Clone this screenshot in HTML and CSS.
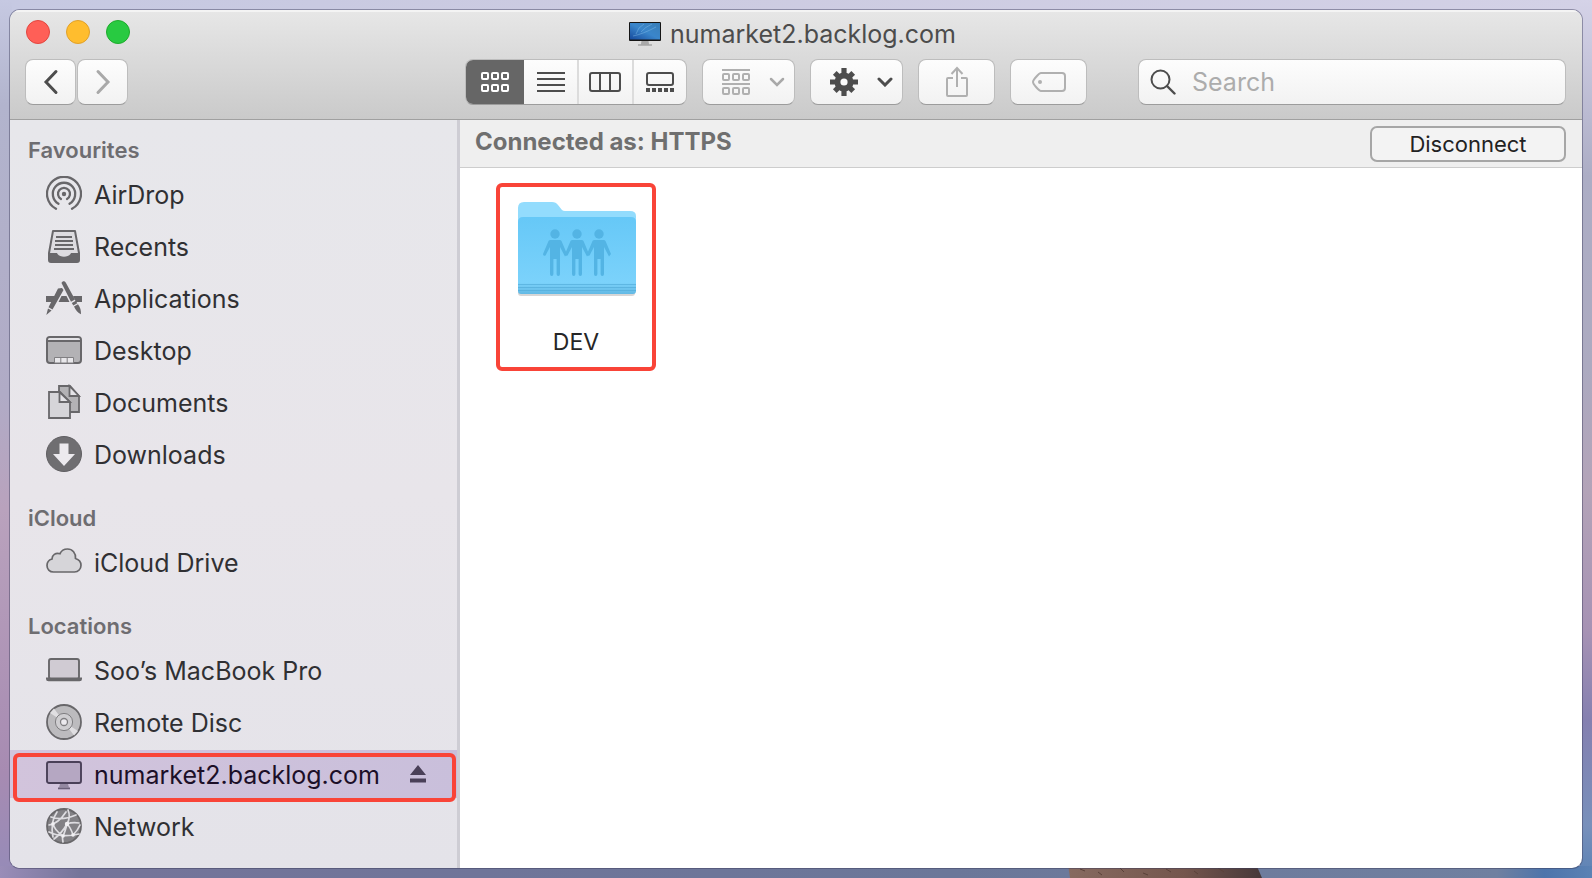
FILE: index.html
```html
<!DOCTYPE html>
<html lang="en">
<head>
<meta charset="utf-8">
<title>numarket2.backlog.com</title>
<meta name="viewport" content="width=device-width, initial-scale=1">
<link rel="stylesheet" href="styles.css">
</head>
<body>
<svg class="rock" viewBox="0 0 194 14" preserveAspectRatio="none" aria-hidden="true">
  <defs><linearGradient id="rock" x1="0" x2="1"><stop offset="0" stop-color="#876a60"/><stop offset=".6" stop-color="#74564d"/><stop offset="1" stop-color="#463839"/></linearGradient></defs>
  <path d="M0 0H188L194 14H2Z" fill="url(#rock)"/>
  <path d="M12 5l5 2M30 8l4 3M52 4l4 4M75 9l5 2M98 5l5 3M126 7l4 3M150 4l6 4" stroke="#5a4139" stroke-width="1"/>
</svg>
<div class="window">
  <header class="chrome">
    <div class="titlebar">
      <div class="lights">
        <button class="light light-close" type="button" aria-label="Close"></button>
        <button class="light light-min" type="button" aria-label="Minimise"></button>
        <button class="light light-zoom" type="button" aria-label="Zoom"></button>
      </div>
      <h1 class="title">
        <svg width="32" height="26" viewBox="0 0 32 26" aria-hidden="true">
          <defs><linearGradient id="scr" x1="0" y1="1" x2="1" y2="0"><stop offset="0" stop-color="#164a9c"/><stop offset=".5" stop-color="#3a86cb"/><stop offset="1" stop-color="#3a7fb8"/></linearGradient></defs>
          <path d="M12.500 20h7l.6 3.500h-8.200z" fill="#a9a9a9"/><path d="M9 23.400h14v1.200H9z" fill="#8a8a8a"/>
          <rect y="1" width="32" height="19" rx="1" fill="#151515"/><rect x="1" y="2" width="30" height="16.500" fill="url(#scr)"/>
          <path d="M7 13Q9 6 15 3M12 11q4-5 11-8M4 15Q14 13 27 6" fill="none" stroke="#8fc6ee" stroke-opacity=".4"/>
        </svg>
        <span>numarket2.backlog.com</span>
      </h1>
    </div>
    <div class="toolbar">
      <div class="nav">
        <button class="btn btn-nav" type="button" aria-label="Back"><svg width="16" height="26" viewBox="0 0 16 26"><path d="M13 2.500L3 13l10 10.500" fill="none" stroke="#4d4d4d" stroke-width="3" stroke-linecap="round"/></svg></button>
        <button class="btn btn-nav" type="button" aria-label="Forward"><svg width="16" height="26" viewBox="0 0 16 26"><path d="M3 2.500L13 13 3 23.500" fill="none" stroke="#a9a9a9" stroke-width="3" stroke-linecap="round"/></svg></button>
      </div>
      <div class="spacer-wide"></div>
      <div class="tools">
        <div class="views">
          <button class="view view-on" type="button" aria-label="Icon view"><svg width="28" height="20" viewBox="0 0 28 20" fill="none" stroke="#fff" stroke-width="2"><rect x="1" y="1" width="6" height="6" rx="1"/><rect x="11" y="1" width="6" height="6" rx="1"/><rect x="21" y="1" width="6" height="6" rx="1"/><rect x="1" y="13" width="6" height="6" rx="1"/><rect x="11" y="13" width="6" height="6" rx="1"/><rect x="21" y="13" width="6" height="6" rx="1"/></svg></button>
          <button class="view" type="button" aria-label="List view"><svg width="28" height="20" viewBox="0 0 28 20" stroke="#4d4d4d" stroke-width="2"><path d="M0 1h28M0 7h28M0 13h28M0 19h28"/></svg></button>
          <button class="view" type="button" aria-label="Column view"><svg width="32" height="20" viewBox="0 0 32 20" fill="none" stroke="#4d4d4d" stroke-width="2"><rect x="1" y="1" width="30" height="18" rx="2"/><path d="M11 1v18M21 1v18"/></svg></button>
          <button class="view" type="button" aria-label="Gallery view"><svg width="28" height="20" viewBox="0 0 28 20" fill="none" stroke="#4d4d4d" stroke-width="2"><rect x="1" y="1" width="26" height="12" rx="2"/><path d="M0 18h28" stroke-width="4" stroke-dasharray="4 2"/></svg></button>
        </div>
        <button class="btn btn-menu" type="button" aria-label="Group by"><svg width="28" height="26" viewBox="0 0 28 26" fill="none" stroke="#b0b0b0" stroke-width="2"><path d="M0 1h28M0 15h28"/><rect x="1" y="5" width="6" height="6" rx="1"/><rect x="11" y="5" width="6" height="6" rx="1"/><rect x="21" y="5" width="6" height="6" rx="1"/><rect x="1" y="19" width="6" height="6" rx="1"/><rect x="11" y="19" width="6" height="6" rx="1"/><rect x="21" y="19" width="6" height="6" rx="1"/></svg><svg width="16" height="10" viewBox="0 0 16 10"><path d="M2 2l6 6 6-6" fill="none" stroke="#a9a9a9" stroke-width="2.500" stroke-linecap="round"/></svg></button>
        <button class="btn btn-menu" type="button" aria-label="Action"><svg width="28" height="28" viewBox="-14 -14 28 28"><g fill="#4d4d4d"><path d="M-2.600-14h5.200v28h-5.200z"/><path d="M-2.600-14h5.200v28h-5.200z" transform="rotate(45) scale(1 .93)"/><path d="M-2.600-14h5.200v28h-5.200z" transform="rotate(90)"/><path d="M-2.600-14h5.200v28h-5.200z" transform="rotate(135) scale(1 .93)"/><circle r="9.500"/></g><circle r="3.600" fill="#fafafa"/></svg><svg width="16" height="10" viewBox="0 0 16 10"><path d="M2 2l6 6 6-6" fill="none" stroke="#4d4d4d" stroke-width="3" stroke-linecap="round"/></svg></button>
        <button class="btn btn-tool" type="button" aria-label="Share"><svg width="24" height="32" viewBox="0 0 24 32" fill="none" stroke="#b0b0b0" stroke-width="2"><path d="M8 12H3a1 1 0 0 0-1 1v16a1 1 0 0 0 1 1h18a1 1 0 0 0 1-1V13a1 1 0 0 0-1-1h-5M12 21V2M6.500 8L12 2l5.500 6"/></svg></button>
        <button class="btn btn-tool" type="button" aria-label="Tags"><svg width="34" height="20" viewBox="0 0 34 20" fill="none" stroke="#b0b0b0" stroke-width="2"><path d="M9 1h21a3 3 0 0 1 3 3v12a3 3 0 0 1-3 3H9C7 19 1 12 1 10S7 1 9 1z"/><circle cx="8" cy="10" r="2" fill="#b0b0b0" stroke="none"/></svg></button>
      </div>
      <div class="spacer"></div>
      <label class="search">
        <svg width="26" height="26" viewBox="0 0 26 26" fill="none" stroke="#4d4d4d" stroke-width="2"><circle cx="10.500" cy="10.500" r="9"/><path d="M17 17l7.500 7.500" stroke-width="2.400" stroke-linecap="round"/></svg>
        <input type="search" placeholder="Search" aria-label="Search">
      </label>
    </div>
  </header>
  <div class="body">
    <nav class="sidebar" aria-label="Sidebar">
      <section class="group">
        <h2 class="heading">Favourites</h2>
        <ul class="list">
          <li><a class="item" href="#"><svg class="icon" viewBox="0 0 36 36" fill="none" stroke="#68676a" stroke-width="2.300" stroke-linecap="round"><circle cx="18" cy="18" r="2.200" fill="#68676a" stroke="none"/><path d="M15 23a6 6 0 1 1 6 0"/><path d="M12.500 27.700a11.200 11.200 0 1 1 11 0" /><path d="M10 32.800a17 17 0 1 1 16 0"/></svg><span class="label">AirDrop</span></a></li>
          <li><a class="item" href="#"><svg class="icon" viewBox="0 0 36 36"><path d="M7 3h22l4 22v7a2 2 0 0 1-2 2H5a2 2 0 0 1-2-2v-7z" fill="#dddce0" stroke="#68676a" stroke-width="2" stroke-linejoin="round"/><path d="M3 25h8c2 5 12 5 14 0h8v7a2 2 0 0 1-2 2H5a2 2 0 0 1-2-2z" fill="#68676a"/><path d="M10 9h16M9 13h18M9 17h18M8 21h20" stroke="#68676a" stroke-width="1.800"/></svg><span class="label">Recents</span></a></li>
          <li><a class="item" href="#"><svg class="icon" viewBox="0 0 36 36" fill="#68676a"><path d="M0 16h9l-3 6H0zM15.500 16h5l3 6h-11zM27 16h9v6h-6z"/><path d="M12 8.500l4-.5 1.500 2L6.500 29.500l-4-2.300zM2 28.500l3.600 2L.3 35z"/><path d="M15.500 3c1-2.500 3.600-2 4.500 0l9 16.500-4 2.300zM25.800 23l4-2.300 1.500 2.600-4 2.300zM28 26.500l4-2.300c2.500 3.500 3 6 3 10-3-1.500-5.500-4-7-7.700z"/></svg><span class="label">Applications</span></a></li>
          <li><a class="item" href="#"><svg class="icon" viewBox="0 0 36 36"><rect x="1" y="5" width="34" height="26" rx="3" fill="#b3b2b5" stroke="#68676a" stroke-width="2"/><path d="M2 8q0-2 2-2h28q2 0 2 2z" fill="#e4e3e7"/><path d="M1 9h34" stroke="#68676a" stroke-width="1.800"/><path d="M8.500 25.500h19V31h-19z" fill="#e8e7ea" stroke="#807f82"/><path d="M14.800 25v6M21.200 25v6" stroke="#807f82"/></svg><span class="label">Desktop</span></a></li>
          <li><a class="item" href="#"><svg class="icon" viewBox="0 0 36 36" stroke="#68676a" stroke-width="1.800"><path d="M13 2h11l9 10v16H13z" fill="#b3b2b5"/><path d="M23.500 2v10H33z" fill="#e4e3e7"/><path d="M3 8h11l10 10v16H3z" fill="#d6d5d9"/><path d="M13.500 8v10H24z" fill="#e4e3e7"/></svg><span class="label">Documents</span></a></li>
          <li><a class="item" href="#"><svg class="icon" viewBox="0 0 36 36"><circle cx="18" cy="18" r="17.500" fill="#6f6e71" stroke="#605f62"/><path d="M13.500 7.500h9v10.500h6.500L18 30 7 18h6.500z" fill="#eceaee"/></svg><span class="label">Downloads</span></a></li>
        </ul>
      </section>
      <section class="group">
        <h2 class="heading">iCloud</h2>
        <ul class="list">
          <li><a class="item" href="#"><svg class="icon" viewBox="0 0 36 36"><path d="M7.500 28C3.500 28 1 25 1 21.500 1 18.300 3.200 15.800 6 15 6 11 9.500 8.500 14 9.700 15.500 6.300 18.200 5 21.500 5 26.500 5 30 9 29.500 14.500 33 15.500 35 18.200 35 21.300 35 25 32.300 28 28.500 28Z" fill="#d6d5d9" stroke="#68676a" stroke-width="1.700"/></svg><span class="label">iCloud Drive</span></a></li>
        </ul>
      </section>
      <section class="group">
        <h2 class="heading">Locations</h2>
        <ul class="list">
          <li><a class="item" href="#"><svg class="icon" viewBox="0 0 36 36"><rect x="3" y="7" width="30" height="20" rx="2" fill="#d0cbd3" stroke="#68676a" stroke-width="1.900"/><path d="M0 25.500h36V27q0 2.300-2.500 2.300h-31Q0 29.300 0 27z" fill="#68676a"/></svg><span class="label">Soo’s MacBook Pro</span></a></li>
          <li><a class="item" href="#"><svg class="icon" viewBox="0 0 36 36"><circle cx="18" cy="18" r="17" fill="#bcbbbe" stroke="#68676a" stroke-width="1.800"/><path d="M18 18L4 9l4-4.500zM18 18l14 9-4 4.500z" fill="#e0dfe2"/><circle cx="18" cy="18" r="8.600" fill="#cfced1" stroke="#807f82"/><circle cx="18" cy="18" r="3.500" fill="#eceaee" stroke="#807f82" stroke-width="1.300"/></svg><span class="label">Remote Disc</span></a></li>
          <li><a class="item item-on" href="#"><svg class="icon" viewBox="0 0 36 36"><rect x="1" y="6" width="34" height="21" rx="2" fill="#b5a7c2" stroke="#4a4058" stroke-width="1.900"/><path d="M14 28h8l1 3.500h-10z" fill="#9388a0"/><path d="M12 31.500h12v1.800H12z" fill="#6b6078"/></svg><span class="label">numarket2.backlog.com</span>
            <svg class="eject" width="16" height="18" viewBox="0 0 16 18" fill="#4a4058"><path d="M8 0l8 10H0zM0 13.500h16v4H0z"/></svg></a></li>
          <li><a class="item" href="#"><svg class="icon" viewBox="0 0 36 36"><circle cx="18" cy="18" r="17" fill="#828185" stroke="#68676a" stroke-width="1.800"/><g fill="none" stroke="#dedde1" stroke-width="1.700" stroke-linecap="round"><path d="M5 9Q16 13 30 7M11 4Q4 14 7 29M22 2q3 7-1 14-5 9-13 15M3 17q9-1 17-13M21 16q4 4 6 11M21 16q5-2 12-1M3 24q12 6 30 2M17 34q-1-6 0-6 2-4 4-12M7 15q1 7 10 13M27 27q5-5 7-10"/></g><g fill="#f0eff2"><circle cx="21" cy="16" r="2.200"/><circle cx="27" cy="27" r="1.800"/><circle cx="17" cy="28" r="1.800"/><circle cx="7" cy="16" r="1.800"/></g></svg><span class="label">Network</span></a></li>
        </ul>
      </section>
      <div class="mark-host"></div>
    </nav>
    <main class="content">
      <div class="infobar">
        <p class="status">Connected as: HTTPS</p>
        <button class="disconnect" type="button">Disconnect</button>
      </div>
      <div class="files">
        <a class="file" href="#">
          <svg width="120" height="98" viewBox="0 0 120 98" aria-hidden="true">
            <defs>
              <linearGradient id="front" x1="0" y1="0" x2="0" y2="1"><stop offset="0" stop-color="#66c8f7"/><stop offset=".85" stop-color="#7bd2fb"/><stop offset="1" stop-color="#63b9e4"/></linearGradient>
            </defs>
            <rect x="2" y="89" width="117" height="7" rx="3" fill="#000" opacity=".16"/>
            <path d="M2 8q0-6 6-6h28q4 0 6 3l4 5q1 1 3 1h65q6 0 6 5v30H2z" fill="#93dcfd"/>
            <path d="M2 22q0-5 5-5h108q5 0 5 5v69q0 3-3 3H5q-3 0-3-3z" fill="url(#front)"/>
            <path d="M2 84.500h118M2 87.500h118M2 90.500h118" stroke="#4fa9d6" stroke-width="1" opacity=".6"/>
            <g fill="#53b4e4">
              <g id="person"><circle cx="39" cy="34" r="4.700"/><path d="M34.500 40h9q1.500 0 2 1l5.500 13-2 2.500L44 47v27q0 2-1.700 2t-1.700-2V59h-3.200v15q0 2-1.700 2T34 74V47l-4.500 8.500q-2.500 1-2.500-1.500L32.500 41q.5-1 2-1z"/></g>
              <use href="#person" x="22"/><use href="#person" x="44"/>
            </g>
          </svg>
          <span class="file-name">DEV</span>
        </a>
      </div>
    </main>
  </div>
</div>
</body>
</html>
```
FILE: styles.css
```css
* { box-sizing: border-box; }

body {
  margin: 0;
  min-height: 100vh;
  padding: 10px;
  display: flex;
  position: relative;
  font-family: Inter, "Liberation Sans", sans-serif;
  font-size: 25px;
  color: #303033;
  background:
    linear-gradient(90deg, #9a8db8 0, #75759a 5%, #6f7599 30%, #6b7799 60%, #7080a0 94%, #4d74ab 97%, #5b82b4 100%) bottom / 100% 12px no-repeat,
    linear-gradient(#c6c9e2 0, #b2b4cd 12%, #b0abc6 45%, #b9a2bd 58%, #a78bb2 88%, #958bb8 100%) left / 12px 100% no-repeat,
    linear-gradient(#d5d3e8 0, #acadc5 20%, #acaac0 42%, #b3a3b8 56%, #a692b4 72%, #8580b0 82%, #7890bb 94%, #5b82b4 100%) right / 12px 100% no-repeat,
    linear-gradient(90deg, #c6c9e2, #cccbe1 40%, #d3d1e6);
}

button, input { font: inherit; color: inherit; }
button { padding: 0; cursor: pointer; }
svg { display: block; flex: none; }

.rock {
  position: absolute;
  left: 67.1%;
  bottom: 0;
  width: 194px;
  height: 14px;
}

.window {
  position: relative;
  flex: 1;
  display: flex;
  flex-direction: column;
  border-radius: 10px;
  overflow: hidden;
  background: #fff;
  box-shadow: 0 0 0 1px rgba(60, 60, 90, .45);
}

.chrome {
  padding: 0 16px 14px 15px;
  background: linear-gradient(#e7e7e7, #cacaca);
  border-bottom: 1px solid #a0a0a0;
  box-shadow: inset 0 2px 0 #f4f4f4;
}

.titlebar {
  display: grid;
  grid-template-columns: 1fr auto 1fr;
  align-items: center;
  height: 49px;
}
.lights { display: flex; gap: 16px; padding: 0 0 5px 1px; }
.light { width: 24px; height: 24px; border-radius: 50%; border: 1px solid; }
.light-close { background: #ff5f57; border-color: #e2463f; }
.light-min { background: #ffbd2e; border-color: #e0a029; }
.light-zoom { background: #28ca41; border-color: #1eab2c; }
.title {
  display: flex;
  align-items: center;
  gap: 9px;
  margin: 0;
  padding: 0 6px 2px 0;
  font-size: 25px;
  line-height: 32px;
  font-weight: 400;
  color: #4c4c4c;
}

.toolbar { display: flex; align-items: center; }
.nav { display: flex; gap: 1px; }
.spacer-wide { flex: 20; }
.spacer { flex: 3; }
.tools { display: flex; gap: 15px; }

.btn, .views, .search {
  height: 46px;
  border: 1px solid #bdbdbd;
  border-bottom-color: #9c9c9c;
  border-radius: 8px;
  background: linear-gradient(#fdfdfd, #f2f2f2);
}
.btn { display: flex; align-items: center; justify-content: center; }
.btn-nav { width: 51px; }
.btn-menu { width: 93px; gap: 19px; padding-left: 10px; }
.btn-tool { width: 77px; }

.views { display: flex; overflow: hidden; width: 222px; }
.view {
  flex: 1;
  display: flex;
  align-items: center;
  justify-content: center;
  border: 0;
  border-left: 2px solid #dcdcdc;
  background: none;
}
.view-on { flex: 0 0 58px; border: 0; background: #666; }
.view-on + .view { border: 0; }

.search {
  flex: 0 1 428px;
  min-width: 0;
  display: flex;
  align-items: center;
  gap: 16px;
  padding: 0 11px;
}
.search input {
  flex: 1;
  width: 0;
  min-width: 0;
  border: 0;
  padding: 0;
  outline: 0;
  background: none;
  appearance: none;
}
.search input::placeholder { color: #acacac; opacity: 1; }

.body { flex: 1; display: flex; }

.sidebar {
  position: relative;
  flex: 0 0 450px;
  padding: 14px 0 18px;
  background: linear-gradient(#e7e7eb, #e8e5ea 50%, #e4e3e9);
  border-right: 3px solid #cecdd4;
}
.group + .group { margin-top: 24px; }
.heading {
  margin: 0 0 4px;
  padding-left: 18px;
  font-size: 22px;
  line-height: 32px;
  font-weight: 600;
  color: #6e6d71;
}
.list {
  display: grid;
  gap: 4px;
  margin: 0;
  padding: 0;
  list-style: none;
}
.item {
  display: flex;
  align-items: center;
  gap: 12px;
  height: 48px;
  padding: 0 31px 0 36px;
  color: inherit;
  text-decoration: none;
  white-space: nowrap;
}
.label { padding-top: 2px; }
.item-on { background: linear-gradient(90deg, #d2c4dc, #c9bfdb); color: #1c0f28; }
.icon { width: 36px; height: 36px; }
.eject { margin-left: auto; }

.mark-host {
  position: absolute;
  left: 3px;
  right: 1px;
  bottom: 66px;
  height: 49px;
  border: 4px solid #f94438;
  border-radius: 6px;
  pointer-events: none;
}

.content { flex: 1; min-width: 0; }
.infobar {
  display: flex;
  align-items: center;
  justify-content: space-between;
  height: 48px;
  padding: 0 16px 0 15px;
  background: #efefef;
  border-bottom: 1px solid #cdcdcd;
}
.status {
  margin: 0;
  font-size: 24px;
  line-height: 32px;
  padding-bottom: 4px;
  font-weight: 700;
  color: #6f6f6f;
}
.disconnect {
  width: 196px;
  height: 36px;
  border: 2px solid #a6a6a6;
  border-radius: 7px;
  background: #f3f3f3;
  font-size: 22px;
  line-height: 30px;
  color: #222;
}

.files { padding: 15px 36px; display: flex; }
.file {
  display: flex;
  flex-direction: column;
  align-items: center;
  justify-content: space-between;
  width: 160px;
  height: 188px;
  padding: 13px 12px 9px;
  border: 4px solid #f94438;
  border-radius: 6px;
  color: #262626;
  text-decoration: none;
}
.file-name { font-size: 23px; line-height: 32px; }
```
